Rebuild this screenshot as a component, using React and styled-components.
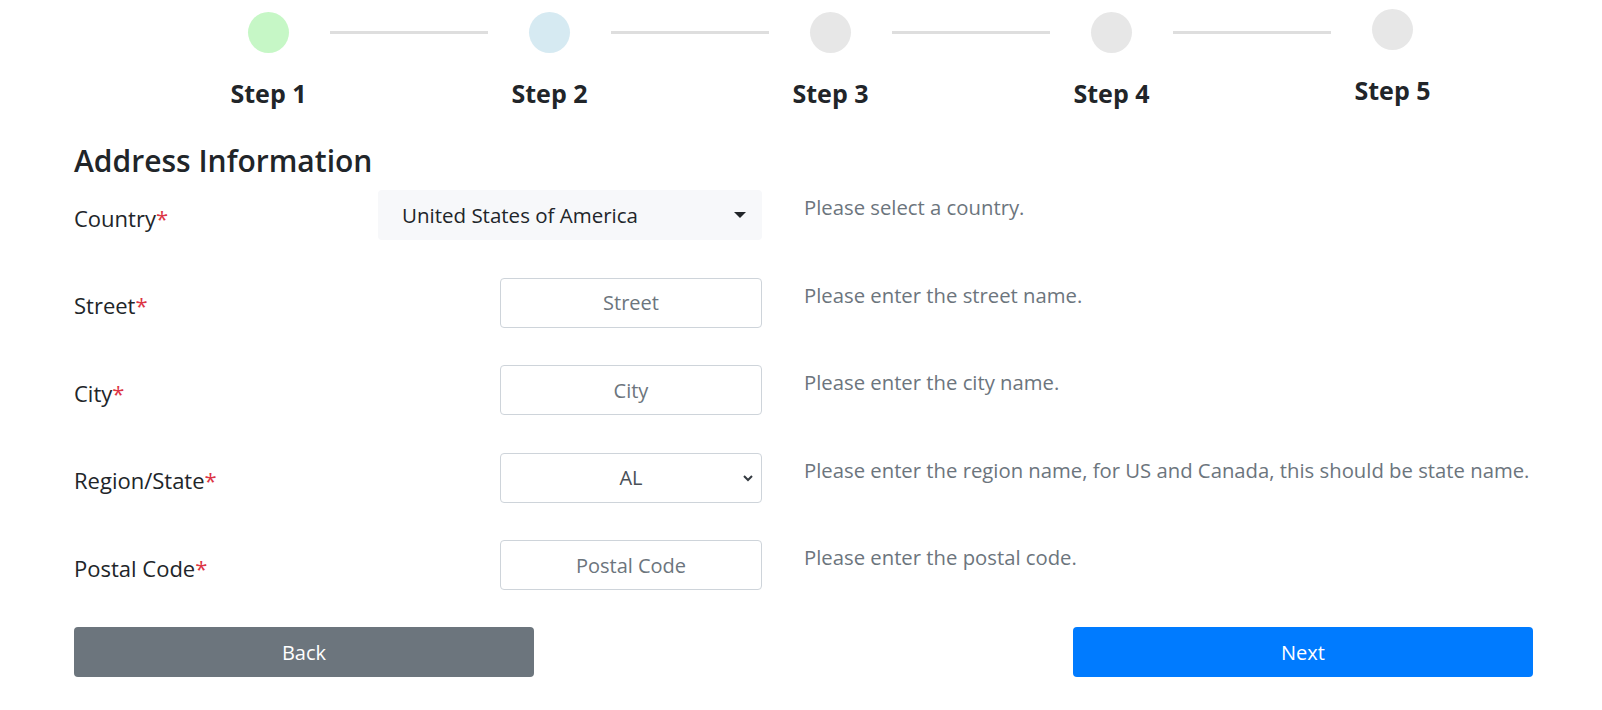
import React from 'react';
import styled, { createGlobalStyle } from 'styled-components';

const GlobalStyle = createGlobalStyle`
  body {
    margin: 0;
    background: #fff;
    font-family: "Open Sans", "Noto Sans", sans-serif;
    color: #212529;
  }
`;

const Page = styled.div`
  width: 1459px;
  padding-left: 74px;
`;

const Stepper = styled.div`
  display: flex;
  align-items: flex-start;
  padding-left: 133px;
`;

const Step = styled.div`
  width: 123px;
  display: flex;
  flex-direction: column;
  align-items: center;
  padding-top: ${(p) => (p.$last ? '9px' : '12px')};
`;

const Dot = styled.div`
  width: 41px;
  height: 41px;
  border-radius: 50%;
  background: ${(p) => p.$color};
`;

const StepLabel = styled.div`
  margin-top: 26px;
  font-size: 25px;
  line-height: 29px;
  font-weight: 700;
  color: #212529;
`;

const Connector = styled.div`
  flex: 0 0 158px;
  height: 3px;
  margin-top: 31px;
  background: #dedede;
`;

const Heading = styled.h3`
  margin: 36px 0 12px;
  font-size: 30px;
  line-height: 34px;
  font-weight: 600;
`;

const Form = styled.div`
  display: flex;
  flex-direction: column;
  gap: 37.5px;
`;

const Row = styled.div`
  display: grid;
  grid-template-columns: 262px 384px 1fr;
  column-gap: 42px;
  min-height: 50px;
`;

const Label = styled.label`
  align-self: center;
  padding-top: 5px;
  font-size: 22px;
  line-height: 30px;
`;

const Req = styled.span`
  color: #dc3545;
`;

const CountrySelect = styled.div`
  display: flex;
  align-items: center;
  justify-content: space-between;
  height: 50px;
  padding: 0 16px 0 24px;
  border-radius: 4px;
  background: #f7f8fa;
  font-size: 20.5px;
  color: #212529;
  cursor: pointer;
`;

const Caret = styled.span`
  width: 0;
  height: 0;
  border-left: 6px solid transparent;
  border-right: 6px solid transparent;
  border-top: 6px solid #212529;
`;

const Field = styled.div`
  position: relative;
  justify-self: end;
  width: 262px;
`;

const Input = styled.input`
  box-sizing: border-box;
  width: 100%;
  height: 50px;
  border: 1px solid #ced4da;
  border-radius: 4px;
  background: #fff;
  font-family: inherit;
  font-size: 20px;
  color: #495057;
  text-align: center;
  outline: none;

  &::placeholder {
    color: #6c757d;
  }
`;

const Select = styled.select`
  box-sizing: border-box;
  width: 100%;
  height: 50px;
  border: 1px solid #ced4da;
  border-radius: 4px;
  background: #fff;
  font-family: inherit;
  font-size: 20px;
  color: #495057;
  text-align: center;
  text-align-last: center;
  appearance: none;
  outline: none;
`;

const Chevron = styled.svg`
  position: absolute;
  right: 8px;
  top: 20px;
  pointer-events: none;
`;

const Hint = styled.div`
  margin-top: 2px;
  font-size: 20.3px;
  line-height: 30px;
  color: #6c757d;
  white-space: nowrap;
`;

const Buttons = styled.div`
  display: flex;
  justify-content: space-between;
  margin-top: 37px;
`;

const Button = styled.button`
  width: 460px;
  height: 50px;
  border: none;
  border-radius: 4px;
  background: ${(p) => (p.$primary ? '#007bff' : '#6c757d')};
  color: #fff;
  font-family: inherit;
  font-size: 20px;
  cursor: pointer;
`;

const steps = [
  { label: 'Step 1', color: '#c6f7c6' },
  { label: 'Step 2', color: '#d6eaf2' },
  { label: 'Step 3', color: '#e7e7e7' },
  { label: 'Step 4', color: '#e7e7e7' },
  { label: 'Step 5', color: '#e7e7e7' },
];

const rows = [
  { label: 'Street', placeholder: 'Street', hint: 'Please enter the street name.' },
  { label: 'City', placeholder: 'City', hint: 'Please enter the city name.' },
];

const App = () => (
  <Page>
    <GlobalStyle />
    <Stepper>
      {steps.map((s, i) => (
        <React.Fragment key={s.label}>
          <Step $last={i === steps.length - 1}>
            <Dot $color={s.color} />
            <StepLabel>{s.label}</StepLabel>
          </Step>
          {i < steps.length - 1 && <Connector />}
        </React.Fragment>
      ))}
    </Stepper>

    <Heading>Address Information</Heading>

    <Form>
      <Row>
        <Label>Country<Req>*</Req></Label>
        <CountrySelect>
          <span>United States of America</span>
          <Caret />
        </CountrySelect>
        <Hint>Please select a country.</Hint>
      </Row>

      {rows.map((r) => (
        <Row key={r.label}>
          <Label>{r.label}<Req>*</Req></Label>
          <Field>
            <Input placeholder={r.placeholder} />
          </Field>
          <Hint>{r.hint}</Hint>
        </Row>
      ))}

      <Row>
        <Label>Region/State<Req>*</Req></Label>
        <Field>
          <Select defaultValue="AL">
            <option value="AL">AL</option>
            <option value="AK">AK</option>
            <option value="AZ">AZ</option>
          </Select>
          <Chevron width="12" height="10" viewBox="0 0 12 10">
            <path d="M2 3l4 4 4-4" fill="none" stroke="#343a40" strokeWidth="2" />
          </Chevron>
        </Field>
        <Hint>Please enter the region name, for US and Canada, this should be state name.</Hint>
      </Row>

      <Row>
        <Label>Postal Code<Req>*</Req></Label>
        <Field>
          <Input placeholder="Postal Code" />
        </Field>
        <Hint>Please enter the postal code.</Hint>
      </Row>
    </Form>

    <Buttons>
      <Button>Back</Button>
      <Button $primary>Next</Button>
    </Buttons>
  </Page>
);

export default App;
